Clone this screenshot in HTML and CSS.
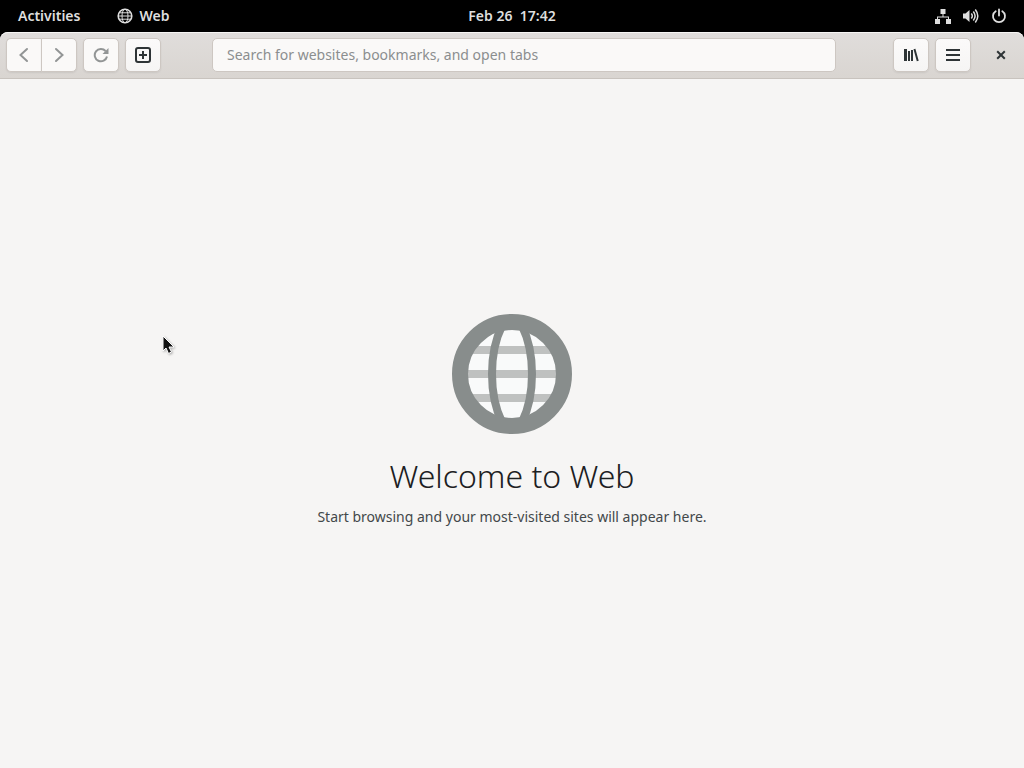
FILE: index.html
```
<!DOCTYPE html>
<html lang="en">
<head>
  <meta charset="UTF-8">
  <meta name="viewport" content="width=device-width, initial-scale=1.0">
  <title>Web</title>
  <link rel="stylesheet" href="styles.css">
</head>
<body>
  <header class="panel">
    <nav class="panel-left">
      <button class="panel-btn">Activities</button>
      <button class="panel-btn">
        <svg width="16" height="16" viewBox="0 0 16 16" fill="none" stroke="currentColor" aria-hidden="true">
          <circle cx="8" cy="8" r="6.8" stroke-width="1.6"/>
          <ellipse cx="8" cy="8" rx="3" ry="6.8"/>
          <path d="M1.5 8h13M2.5 4.8h11M2.5 11.2h11"/>
        </svg>
        Web
      </button>
    </nav>
    <button class="panel-btn clock">Feb 26&nbsp; 17:42</button>
    <button class="panel-btn status" aria-label="System menu">
      <svg width="16" height="16" viewBox="0 0 16 16" aria-hidden="true">
        <path d="M5.500 1h5v5H8.500v2.500H14V11h2v5h-5v-5h2V9.500H3V11h2v5H0v-5h2V8.500h5.500V6h-2z" fill="currentColor"/>
      </svg>
      <svg width="16" height="16" viewBox="0 0 16 16" aria-hidden="true">
        <path d="M0 5.500h2.500L6.500 2v12l-4-3.500H0z" fill="currentColor"/>
        <path d="M8.300 5.500q2 2.500 0 5M10.300 3.500q3.600 4.500 0 9M12.300 1.500q5 6.500 0 13" fill="none" stroke="currentColor" stroke-width="1.5"/>
      </svg>
      <svg width="16" height="16" viewBox="0 0 16 16" fill="none" stroke="currentColor" stroke-width="1.8" stroke-linecap="round" aria-hidden="true">
        <path d="M8 1.500v6M4.700 3.200a6 6 0 1 0 6.600 0"/>
      </svg>
    </button>
  </header>

  <div class="window">
    <div class="toolbar">
      <div class="linked">
        <button class="tool-btn" aria-label="Back" disabled>
          <svg width="16" height="16" viewBox="0 0 16 16" aria-hidden="true"><path d="M11 2 4.500 8l6.500 6" fill="none" stroke="currentColor" stroke-width="2" stroke-linecap="round"/></svg>
        </button>
        <button class="tool-btn" aria-label="Forward" disabled>
          <svg width="16" height="16" viewBox="0 0 16 16" aria-hidden="true"><path d="M5 2l6.500 6L5 14" fill="none" stroke="currentColor" stroke-width="2" stroke-linecap="round"/></svg>
        </button>
      </div>
      <button class="tool-btn" aria-label="Reload" disabled>
        <svg width="16" height="16" viewBox="0 0 16 16" aria-hidden="true">
          <path d="M12.600 4A6.200 6.200 0 1 0 14 9.500" fill="none" stroke="currentColor" stroke-width="2"/>
          <path d="M15.500 1v6h-6z" fill="currentColor"/>
        </svg>
      </button>
      <button class="tool-btn" aria-label="New tab">
        <svg width="16" height="16" viewBox="0 0 16 16" fill="none" stroke="currentColor" stroke-width="2" aria-hidden="true">
          <rect x="1" y="1" width="14" height="14" rx="2"/>
          <path d="M8 4v8M4 8h8"/>
        </svg>
      </button>
      <input class="address" type="text" aria-label="Address" placeholder="Search for websites, bookmarks, and open tabs">
      <button class="tool-btn" aria-label="Library">
        <svg width="16" height="16" viewBox="0 0 16 16" aria-hidden="true">
          <path d="M1 2h3v12H1zM5 4h2v10H5zM8 3h2v11H8zM10.500 2.300l1.900-.5 3.300 12-1.900.5z" fill="currentColor"/>
        </svg>
      </button>
      <button class="tool-btn" aria-label="Menu">
        <svg width="16" height="16" viewBox="0 0 16 16" aria-hidden="true"><path d="M1 2h14v2H1zM1 7h14v2H1zM1 12h14v2H1z" fill="currentColor"/></svg>
      </button>
      <button class="close-btn" aria-label="Close">
        <svg width="16" height="16" viewBox="0 0 16 16" aria-hidden="true"><path d="M4.200 4.200l7.600 7.600M11.800 4.200l-7.600 7.600" stroke="currentColor" stroke-width="2"/></svg>
      </button>
    </div>

    <main class="welcome">
      <svg class="globe" width="120" height="120" viewBox="0 0 120 120" aria-hidden="true">
        <circle cx="60" cy="60" r="46" fill="#f9fafa"/>
        <path d="M16 36h88M14 60h92M16 84h88" stroke="#bfc1c0" stroke-width="8"/>
        <g fill="none" stroke="#888d8c">
          <path d="M50 12Q40 32 40 60t10 48M70 12q10 20 10 48t-10 48" stroke-width="8"/>
          <circle cx="60" cy="60" r="52" stroke-width="16"/>
        </g>
      </svg>
      <h1>Welcome to Web</h1>
      <p>Start browsing and your most-visited sites will appear here.</p>
    </main>
  </div>

  <svg class="pointer" width="14" height="20" viewBox="0 0 14 20" aria-hidden="true">
    <path d="M1 1v15l3-3 2.500 5.500 3-1.500-2.500-5h5z" fill="#111" stroke="#fff"/>
  </svg>
</body>
</html>
```

FILE: styles.css
```
* {
  box-sizing: border-box;
}
body {
  margin: 0;
  min-height: 100vh;
  display: flex;
  flex-direction: column;
  background: #000;
  font-family: 'Noto Sans', 'Open Sans', sans-serif;
  font-size: 14px;
}
button, input {
  font: inherit;
}
svg {
  display: block;
  flex: none;
}

/* top panel */
.panel {
  height: 32px;
  display: grid;
  grid-template-columns: 1fr auto 1fr;
  align-items: center;
  padding: 0 6px;
}
.panel-left {
  display: flex;
  gap: 13px;
}
.panel-btn {
  display: flex;
  align-items: center;
  gap: 6px;
  padding: 0 12px;
  border: none;
  background: none;
  color: #dedede;
  font-weight: 600;
  line-height: 32px;
}
.status {
  justify-self: end;
  gap: 12px;
  padding: 0 11px;
}

/* browser window */
.window {
  flex: 1;
  display: flex;
  flex-direction: column;
  background: #f6f5f4;
  border-radius: 8px 8px 0 0;
}
.toolbar {
  display: flex;
  align-items: center;
  gap: 6px;
  padding: 5px 5px 6px 6px;
  border-top: 1px solid #f6f5f4;
  border-bottom: 1px solid #c8c3be;
  border-radius: 8px 8px 0 0;
  background: linear-gradient(to top, #d9d5d1, #e0dddb);
}
.linked {
  display: flex;
}
.tool-btn {
  width: 36px;
  height: 34px;
  padding: 0;
  display: flex;
  align-items: center;
  justify-content: center;
  border: 1px solid #cdc7c2;
  border-radius: 5px;
  background: linear-gradient(to top, #f6f5f4, #fbfafa);
  box-shadow: 0 1px 2px rgba(0,0,0,0.07);
  color: #2e3436;
}
.tool-btn:disabled {
  background: #faf9f8;
  color: #929595;
}
.linked .tool-btn:first-child {
  width: 35px;
  border-right: none;
  border-radius: 5px 0 0 5px;
}
.linked .tool-btn:last-child {
  border-radius: 0 5px 5px 0;
}
.address {
  flex: 1;
  min-width: 0;
  height: 34px;
  margin: 0 51px 0 45px;
  padding: 0 14px 2px;
  border: 1px solid #cdc7c2;
  border-radius: 5px;
  background: #faf9f8;
  color: #2e3436;
}
.address::placeholder {
  color: #8b8e8f;
  opacity: 1;
}
.close-btn {
  width: 36px;
  height: 34px;
  margin-left: 6px;
  padding: 0;
  display: flex;
  align-items: center;
  justify-content: center;
  border: none;
  background: none;
  color: #2e3436;
}

/* empty overview */
.welcome {
  flex: 1;
  display: flex;
  flex-direction: column;
  align-items: center;
  justify-content: center;
  padding-bottom: 6px;
  text-align: center;
}
.welcome h1 {
  margin: 20px 0 8px;
  color: #1c2022;
  font-size: 32px;
  font-weight: 300;
  line-height: 44px;
}
.welcome p {
  margin: 0;
  color: #43484a;
  font-size: 14px;
  line-height: 22px;
}

.pointer {
  position: absolute;
  left: 162px;
  top: 335px;
  filter: drop-shadow(1px 1px 1px rgba(0,0,0,0.3));
}
```
